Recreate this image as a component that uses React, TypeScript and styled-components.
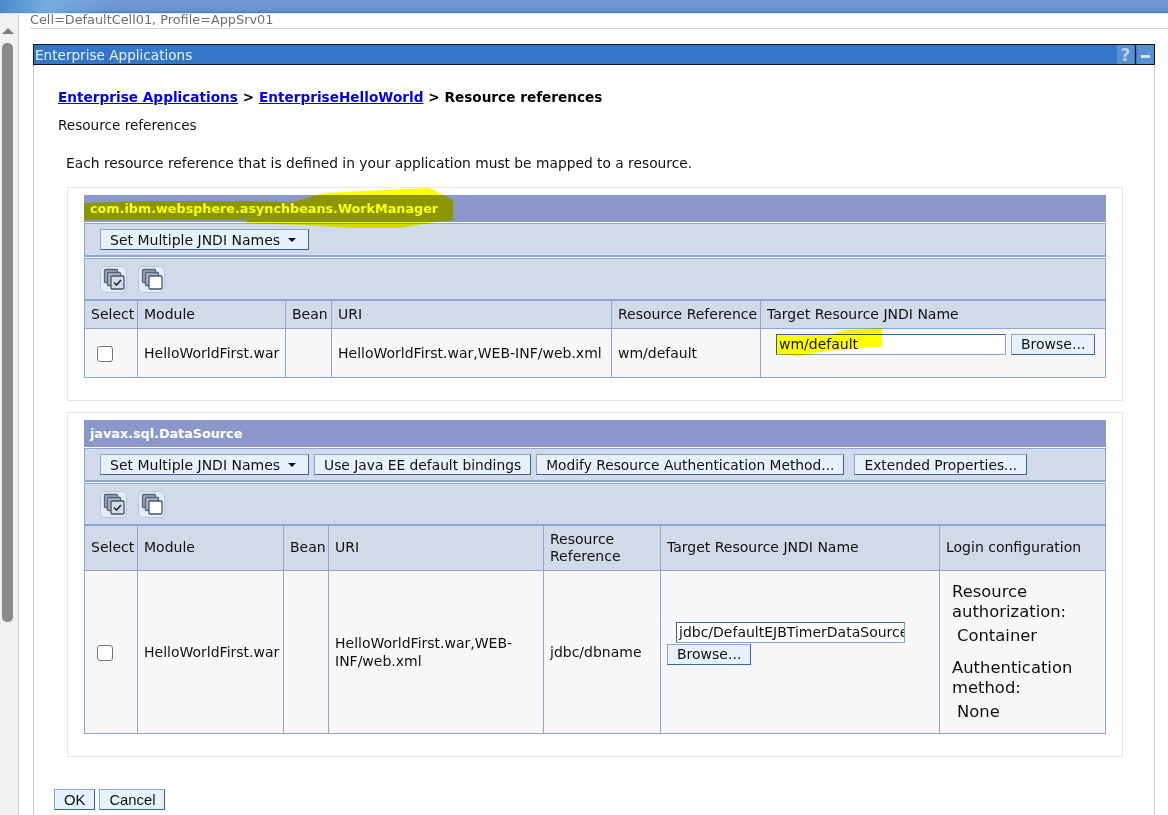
import styled, { createGlobalStyle } from 'styled-components';

const GlobalStyle = createGlobalStyle`
  html, body {
    margin: 0;
    padding: 0;
    height: 815px;
    overflow: hidden;
    background: #fff;
    font-family: "DejaVu Sans", Verdana, sans-serif;
    font-size: 14px;
    color: #111;
  }
  * { box-sizing: border-box; }
`;

const Banner = styled.div`
  height: 14px;
  border-bottom: 1px solid #dfe6f2;
  background:
    linear-gradient(115deg, rgba(60, 130, 200, 0.7) 0, rgba(120, 185, 225, 0.65) 45px, rgba(120, 185, 225, 0.35) 75px, rgba(255, 255, 255, 0) 105px, rgba(255, 255, 255, 0) 118px, rgba(200, 220, 240, 0) 119px),
    linear-gradient(180deg, #7199d5 0%, #6893d1 80%, #4778c5 100%);
`;

const Shell = styled.div`
  display: flex;
  height: 801px;
`;

const ScrollRail = styled.div`
  width: 19px;
  flex: none;
  background: #f1f1f1;
  border-right: 1px solid #cfcfcf;
  padding: 14px 0 0 2px;
`;

const ScrollArrow = styled.div`
  width: 0;
  height: 0;
  border-left: 6px solid transparent;
  border-right: 6px solid transparent;
  border-bottom: 6px solid #7d7d7d;
`;

const ScrollThumb = styled.div`
  width: 11px;
  height: 579px;
  margin-top: 9px;
  border-radius: 5px;
  background: #8a8a8a;
`;

const Main = styled.div`
  flex: 1;
  min-width: 0;
  padding-left: 11px;
`;

const CellLine = styled.div`
  height: 15px;
  border-bottom: 1px solid #cfcfcf;
  color: #6f6f6f;
  font-size: 12.85px;
  line-height: 12px;
  white-space: nowrap;
`;

const Portlet = styled.div`
  width: 1122px;
  height: 800px;
  margin: 15px 0 0 3px;
  border-left: 1px solid #c9c9c9;
  border-right: 1px solid #c9c9c9;
`;

const PortletTitle = styled.div`
  height: 21px;
  margin-left: -1px;
  margin-right: -1px;
  display: flex;
  align-items: center;
  background: #3277c8;
  border: 1px solid #10161f;
  color: #e8f0fa;
  font-size: 13.6px;
  padding-left: 1px;
`;

const TitleText = styled.span`
  flex: 1;
`;

const TitleIcon = styled.span`
  width: 17px;
  height: 19px;
  display: flex;
  align-items: center;
  justify-content: center;
  background: #5a8fd0;
  color: #b9d2ee;
  font-weight: bold;
  font-size: 17px;
`;

const MinimizeBar = styled.span`
  width: 9px;
  height: 3px;
  margin-top: 3px;
  background: #d5e3f4;
`;

const IconDivider = styled.span`
  width: 1px;
  height: 19px;
  background: #10161f;
  margin: 0 1px 0 1px;
`;

const PortletBody = styled.div`
  padding: 23px 0 0 24px;
`;

const Crumbs = styled.div`
  font-weight: bold;
  font-size: 13.65px;
  line-height: 18px;
  color: #000;
`;

const CrumbLink = styled.a`
  color: #0000ee;
  text-decoration: underline;
`;

const PageName = styled.div`
  margin-top: 10px;
  line-height: 18px;
  font-size: 13.6px;
`;

const Intro = styled.div`
  margin: 20px 0 0 8px;
  line-height: 18px;
  font-size: 13.8px;
`;

const Section = styled.div<{ $top: number; $height: number }>`
  width: 1056px;
  height: ${({ $height }) => $height}px;
  margin: ${({ $top }) => $top}px 0 0 9px;
  border: 1px solid #e6e6e6;
  padding: 7px 16px 0;
`;

const Frame = styled.div`
  width: 1022px;
`;

const SectionTitle = styled.div`
  position: relative;
  height: 27px;
  display: flex;
  align-items: center;
  padding-left: 6px;
  background: #8a97c8;
  color: #fff;
  font-weight: bold;
  font-size: 12.75px;
`;

const Band = styled.div<{ $height: number }>`
  height: ${({ $height }) => $height}px;
  margin-top: 1px;
  display: flex;
  align-items: center;
  background: #d2d9e8;
  border: 1px solid #8aa6d6;
  border-width: 1px 1px 2px 1px;
`;

const ActionBand = styled(Band)`
  padding-left: 15px;
  gap: 5px;
`;

const IconBand = styled(Band)`
  padding-left: 15px;
  gap: 11px;
`;

const ActionButton = styled.button<{ $gap?: number }>`
  height: 21px;
  padding: 0 9px;
  margin-left: ${({ $gap }) => $gap ?? 0}px;
  background: #e8f0fc;
  border: 1px solid #86a6cc;
  border-right-color: #33689f;
  border-bottom-color: #33689f;
  color: #111;
  font: 13.8px "DejaVu Sans", Verdana, sans-serif;
  white-space: nowrap;
`;

const MenuButton = styled(ActionButton)`
  font-size: 14px;
`;

const Caret = styled.span`
  display: inline-block;
  margin: 0 3px 0 8px;
  vertical-align: 3px;
  border-left: 4px solid transparent;
  border-right: 4px solid transparent;
  border-top: 4px solid #111;
`;

const SquareButton = styled.button`
  width: 27px;
  height: 27px;
  padding: 0;
  display: flex;
  align-items: center;
  justify-content: center;
  background: #e4ebf7;
  border: 1px solid #b4c6e4;
  border-radius: 5px;
`;

const Grid = styled.table`
  width: 1022px;
  border-collapse: collapse;
  table-layout: fixed;
`;

const HeadCell = styled.th`
  padding: 0 6px;
  background: #d2d9e8;
  border: 1px solid #8aa6d6;
  border-top: 0;
  border-left-color: #f4f6fb;
  font-weight: normal;
  font-size: 14px;
  line-height: 17px;
  text-align: left;
  white-space: nowrap;
  &:first-child { border-left-color: #8aa6d6; }
`;

const WrapHeadCell = styled(HeadCell)`
  white-space: normal;
`;

const BodyCell = styled.td<{ $top?: boolean }>`
  padding: ${({ $top }) => ($top ? '5px 6px 0 6px' : '0 6px')};
  background: #f7f7f7;
  border: 1px solid #8aa6d6;
  font-size: 14px;
  line-height: 18px;
  vertical-align: ${({ $top }) => ($top ? 'top' : 'middle')};
`;

const CheckCell = styled(BodyCell)`
  text-align: center;
  padding: 0 12px 0 0;
`;

const Check = styled.span`
  display: inline-block;
  width: 16px;
  height: 16px;
  vertical-align: middle;
  background: #fff;
  border: 1.5px solid #767676;
  border-radius: 3px;
`;

const NameField = styled.div<{ $width: number }>`
  position: relative;
  width: ${({ $width }) => $width}px;
  height: 21px;
  padding: 0 2px;
  background: #fff;
  border: 1px solid #7fa6cf;
  border-top-color: #33689f;
  border-left-color: #33689f;
  font-size: 14px;
  line-height: 19px;
  overflow: hidden;
  white-space: nowrap;
`;

const FieldRow = styled.div`
  display: flex;
  gap: 5px;
  padding-left: 9px;
`;

const StackedField = styled.div`
  padding-bottom: 17px;
`;

const LongFieldWrap = styled.div`
  padding-left: 9px;
  margin-bottom: 1px;
`;

const BrowseButton = styled(ActionButton)`
  padding: 0 9px;
  font-size: 14px;
`;

const LoginBlock = styled.div`
  padding: 6px 0 0 6px;
  font-size: 16.4px;
  line-height: 20px;
`;

const LoginValue = styled.div`
  margin: 4px 0 12px 5px;
  &:last-child { margin-bottom: 0; }
`;

const Footer = styled.div`
  display: flex;
  gap: 4px;
  margin: 32px 0 0 -4px;
`;

const FooterButton = styled(ActionButton)`
  padding: 0 9px;
  font-family: "Liberation Sans", Arial, sans-serif;
  font-size: 14.8px;
`;

const Highlight = styled.svg`
  position: absolute;
  mix-blend-mode: multiply;
  pointer-events: none;
`;

const TitleHighlight = styled(Highlight)`
  left: 0;
  top: -8px;
`;

const FieldWrap = styled.div`
  position: relative;
`;

const FieldHighlight = styled(Highlight)`
  left: -1px;
  top: -6px;
`;

const SelectAllIcon = () => (
  <svg width="22" height="22" viewBox="0 0 22 22" fill="none">
    <rect x="1.5" y="1.5" width="13" height="13" rx="1" fill="#9aa7bd" stroke="#55627a" strokeWidth="1.3" />
    <rect x="4.5" y="4.5" width="13" height="13" rx="1" fill="#a9b4c8" stroke="#55627a" strokeWidth="1.3" />
    <rect x="8" y="8" width="13" height="13" rx="1" fill="#d5dce9" stroke="#475369" strokeWidth="1.3" />
    <path d="M11 14.5l2.5 2.5 4.5-5" stroke="#1f2733" strokeWidth="1.6" />
  </svg>
);

const DeselectAllIcon = () => (
  <svg width="22" height="22" viewBox="0 0 22 22" fill="none">
    <rect x="1.5" y="1.5" width="13" height="13" rx="1" fill="#9aa7bd" stroke="#55627a" strokeWidth="1.3" />
    <rect x="4.5" y="4.5" width="13" height="13" rx="1" fill="#a9b4c8" stroke="#55627a" strokeWidth="1.3" />
    <rect x="8" y="8" width="13" height="13" rx="1" fill="#fff" stroke="#475369" strokeWidth="1.3" />
  </svg>
);

const SelectionTools = () => (
  <IconBand $height={43}>
    <SquareButton aria-label="Select all">
      <SelectAllIcon />
    </SquareButton>
    <SquareButton aria-label="Deselect all">
      <DeselectAllIcon />
    </SquareButton>
  </IconBand>
);

const SetNamesButton = () => (
  <MenuButton>
    Set Multiple JNDI Names
    <Caret />
  </MenuButton>
);

function App() {
  return (
    <>
      <GlobalStyle />
      <Banner />
      <Shell>
        <ScrollRail>
          <ScrollArrow />
          <ScrollThumb />
        </ScrollRail>
        <Main>
          <CellLine>Cell=DefaultCell01, Profile=AppSrv01</CellLine>
          <Portlet>
            <PortletTitle>
              <TitleText>Enterprise Applications</TitleText>
              <TitleIcon>?</TitleIcon>
              <IconDivider />
              <TitleIcon>
                <MinimizeBar />
              </TitleIcon>
            </PortletTitle>
            <PortletBody>
              <Crumbs>
                <CrumbLink href="#">Enterprise Applications</CrumbLink> &gt;{' '}
                <CrumbLink href="#">EnterpriseHelloWorld</CrumbLink> &gt; Resource references
              </Crumbs>
              <PageName>Resource references</PageName>
              <Intro>Each resource reference that is defined in your application must be mapped to a resource.</Intro>

              <Section $top={15} $height={214}>
                <Frame>
                  <SectionTitle>
                    com.ibm.websphere.asynchbeans.WorkManager
                    <TitleHighlight width="372" height="42" viewBox="0 0 372 42">
                      <path
                        d="M0 16 L60 14 L150 14 L209 15 L240 6 L300 3 L345 1 L369 13 L369 33 L345 36 L316 41 L270 41 L220 38 L163 36 L163 33 L0 33 Z"
                        fill="#ffff00"
                      />
                    </TitleHighlight>
                  </SectionTitle>
                  <ActionBand $height={34}>
                    <SetNamesButton />
                  </ActionBand>
                  <SelectionTools />
                  <Grid>
                    <colgroup>
                      <col style={{ width: 53 }} />
                      <col style={{ width: 148 }} />
                      <col style={{ width: 46 }} />
                      <col style={{ width: 280 }} />
                      <col style={{ width: 149 }} />
                      <col />
                    </colgroup>
                    <thead>
                      <tr style={{ height: 27 }}>
                        <HeadCell>Select</HeadCell>
                        <HeadCell>Module</HeadCell>
                        <HeadCell>Bean</HeadCell>
                        <HeadCell>URI</HeadCell>
                        <HeadCell>Resource Reference</HeadCell>
                        <HeadCell>Target Resource JNDI Name</HeadCell>
                      </tr>
                    </thead>
                    <tbody>
                      <tr style={{ height: 49 }}>
                        <CheckCell>
                          <Check />
                        </CheckCell>
                        <BodyCell>HelloWorldFirst.war</BodyCell>
                        <BodyCell />
                        <BodyCell>HelloWorldFirst.war,WEB-INF/web.xml</BodyCell>
                        <BodyCell>wm/default</BodyCell>
                        <BodyCell $top>
                          <FieldRow>
                            <FieldWrap>
                              <NameField $width={230}>wm/default</NameField>
                              <FieldHighlight width="108" height="30" viewBox="0 0 108 30">
                                <path d="M1 7 L55 7 L70 2 L107 0 L107 19 L85 20 L45 24 L25 28 L1 26 Z" fill="#ffff00" />
                              </FieldHighlight>
                            </FieldWrap>
                            <BrowseButton>Browse...</BrowseButton>
                          </FieldRow>
                        </BodyCell>
                      </tr>
                    </tbody>
                  </Grid>
                </Frame>
              </Section>

              <Section $top={11} $height={345}>
                <Frame>
                  <SectionTitle>javax.sql.DataSource</SectionTitle>
                  <ActionBand $height={34}>
                    <SetNamesButton />
                    <ActionButton>Use Java EE default bindings</ActionButton>
                    <ActionButton>Modify Resource Authentication Method...</ActionButton>
                    <ActionButton $gap={5}>Extended Properties...</ActionButton>
                  </ActionBand>
                  <SelectionTools />
                  <Grid>
                    <colgroup>
                      <col style={{ width: 53 }} />
                      <col style={{ width: 146 }} />
                      <col style={{ width: 45 }} />
                      <col style={{ width: 215 }} />
                      <col style={{ width: 117 }} />
                      <col style={{ width: 279 }} />
                      <col />
                    </colgroup>
                    <thead>
                      <tr style={{ height: 44 }}>
                        <HeadCell>Select</HeadCell>
                        <HeadCell>Module</HeadCell>
                        <HeadCell>Bean</HeadCell>
                        <HeadCell>URI</HeadCell>
                        <WrapHeadCell>Resource Reference</WrapHeadCell>
                        <HeadCell>Target Resource JNDI Name</HeadCell>
                        <HeadCell>Login configuration</HeadCell>
                      </tr>
                    </thead>
                    <tbody>
                      <tr style={{ height: 163 }}>
                        <CheckCell>
                          <Check />
                        </CheckCell>
                        <BodyCell>HelloWorldFirst.war</BodyCell>
                        <BodyCell />
                        <BodyCell>HelloWorldFirst.war,WEB-INF/web.xml</BodyCell>
                        <BodyCell>jdbc/dbname</BodyCell>
                        <BodyCell>
                          <StackedField>
                            <LongFieldWrap>
                              <NameField $width={229}>jdbc/DefaultEJBTimerDataSource</NameField>
                            </LongFieldWrap>
                            <BrowseButton>Browse...</BrowseButton>
                          </StackedField>
                        </BodyCell>
                        <BodyCell $top>
                          <LoginBlock>
                            Resource authorization:
                            <LoginValue>Container</LoginValue>
                            Authentication method:
                            <LoginValue>None</LoginValue>
                          </LoginBlock>
                        </BodyCell>
                      </tr>
                    </tbody>
                  </Grid>
                </Frame>
              </Section>

              <Footer>
                <FooterButton>OK</FooterButton>
                <FooterButton>Cancel</FooterButton>
              </Footer>
            </PortletBody>
          </Portlet>
        </Main>
      </Shell>
    </>
  );
}

export default App;
